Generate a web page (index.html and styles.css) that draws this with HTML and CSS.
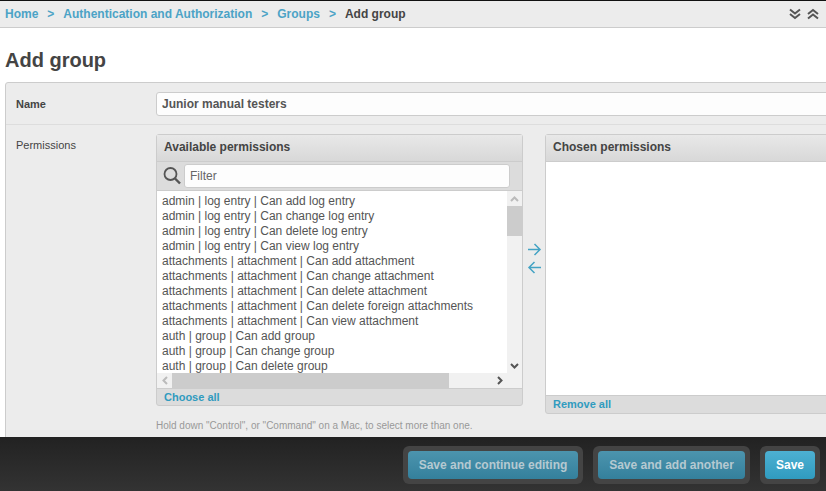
FILE: index.html
```html
<!DOCTYPE html>
<html lang="en">
<head>
    <meta charset="UTF-8">
    <meta name="viewport" content="width=device-width, initial-scale=1.0">
    <title>Add group</title>
    <link rel="stylesheet" href="styles.css">
</head>
<body>
    <header class="topbar">
        <nav class="breadcrumbs">
            <a href="#">Home</a>
            <span class="sep">&gt;</span>
            <a href="#">Authentication and Authorization</a>
            <span class="sep">&gt;</span>
            <a href="#">Groups</a>
            <span class="sep">&gt;</span>
            <span class="current">Add group</span>
        </nav>
        <div class="toggles">
            <svg width="14" height="12" viewBox="0 0 14 12"><path d="M2 1.5l5 4 5-4M2 6l5 4 5-4" fill="none" stroke="#555" stroke-width="2"/></svg>
            <svg width="14" height="12" viewBox="0 0 14 12"><path d="M2 6l5-4 5 4M2 10.5l5-4 5 4" fill="none" stroke="#555" stroke-width="2"/></svg>
        </div>
    </header>

    <main class="content">
        <h1>Add group</h1>
        <div class="module">
            <div class="row row-name">
                <label class="label-strong">Name</label>
                <input class="text-input" type="text" value="Junior manual testers">
            </div>
            <div class="row row-perms">
                <label class="label">Permissions</label>
                <div class="perms">
                    <div class="selector">
                        <div class="box box-available">
                            <h2>Available permissions</h2>
                            <div class="filter">
                                <svg width="20" height="20" viewBox="0 0 20 20"><circle cx="8.5" cy="8" r="6" fill="none" stroke="#555" stroke-width="1.8"/><path d="M13 12.5l5 5" stroke="#555" stroke-width="2.4"/></svg>
                                <input class="filter-input" type="text" placeholder="Filter">
                            </div>
                            <div class="listbox">
                                <div class="list-main">
                                    <ul class="options">
                                        <li>admin | log entry | Can add log entry</li>
                                        <li>admin | log entry | Can change log entry</li>
                                        <li>admin | log entry | Can delete log entry</li>
                                        <li>admin | log entry | Can view log entry</li>
                                        <li>attachments | attachment | Can add attachment</li>
                                        <li>attachments | attachment | Can change attachment</li>
                                        <li>attachments | attachment | Can delete attachment</li>
                                        <li>attachments | attachment | Can delete foreign attachments</li>
                                        <li>attachments | attachment | Can view attachment</li>
                                        <li>auth | group | Can add group</li>
                                        <li>auth | group | Can change group</li>
                                        <li>auth | group | Can delete group</li>
                                    </ul>
                                    <div class="vscroll">
                                        <span class="sb-btn"><svg width="9" height="6" viewBox="0 0 9 6"><path d="M1 5l3.5-3.5L8 5" fill="none" stroke="#bbb" stroke-width="2"/></svg></span>
                                        <span class="vthumb"></span>
                                        <span class="vtrack"></span>
                                        <span class="sb-btn"><svg width="9" height="6" viewBox="0 0 9 6"><path d="M1 1l3.5 3.5L8 1" fill="none" stroke="#555" stroke-width="2"/></svg></span>
                                    </div>
                                </div>
                                <div class="hscroll">
                                    <span class="sb-btn"><svg width="6" height="9" viewBox="0 0 6 9"><path d="M5 1L1.5 4.5 5 8" fill="none" stroke="#bbb" stroke-width="2"/></svg></span>
                                    <span class="hthumb"></span>
                                    <span class="htrack"></span>
                                    <span class="sb-btn"><svg width="6" height="9" viewBox="0 0 6 9"><path d="M1 1l3.5 3.5L1 8" fill="none" stroke="#555" stroke-width="2"/></svg></span>
                                    <span class="sb-corner"></span>
                                </div>
                            </div>
                            <a class="box-link" href="#">Choose all</a>
                        </div>
                        <div class="movers">
                            <svg width="15" height="13" viewBox="0 0 15 13"><path d="M1 6.5h12M7.5 1l5.5 5.5L7.500 12" fill="none" stroke="#44a3c4" stroke-width="1.500"/></svg>
                            <svg width="15" height="13" viewBox="0 0 15 13"><path d="M14 6.500H2M7.500 1L2 6.500 7.500 12" fill="none" stroke="#44a3c4" stroke-width="1.500"/></svg>
                        </div>
                        <div class="box box-chosen">
                            <h2>Chosen permissions</h2>
                            <div class="chosen-list"></div>
                            <a class="box-link" href="#">Remove all</a>
                        </div>
                    </div>
                    <p class="help">Hold down "Control", or "Command" on a Mac, to select more than one.</p>
                </div>
            </div>
        </div>
    </main>

    <footer class="actions">
        <div class="btn-wrap"><button class="btn btn-dim btn-continue">Save and continue editing</button></div>
        <div class="btn-wrap"><button class="btn btn-dim btn-another">Save and add another</button></div>
        <div class="btn-wrap"><button class="btn btn-save">Save</button></div>
    </footer>
</body>
</html>
```

FILE: styles.css
```css
* {
    box-sizing: border-box;
    margin: 0;
    padding: 0;
}

html, body {
    height: 491px;
    overflow: hidden;
}

body {
    font-family: "Liberation Sans", Arial, sans-serif;
    font-size: 12px;
    color: #444;
    background-color: #fff;
    display: flex;
    flex-direction: column;
}

a {
    color: #309bbf;
    text-decoration: none;
}

.topbar {
    height: 28px;
    flex: none;
    display: flex;
    justify-content: space-between;
    align-items: center;
    padding: 0 6px 0 5px;
    background-color: #ececec;
    border-top: 1px solid #111;
    border-bottom: 1px solid #ccc;
}

.breadcrumbs {
    display: flex;
    align-items: center;
    font-size: 12px;
}

.breadcrumbs a {
    color: #4ba3c6;
    font-weight: bold;
}

.breadcrumbs .sep {
    width: 25px;
    text-align: center;
    color: #4ba3c6;
    font-weight: bold;
}

.breadcrumbs .current {
    font-weight: bold;
    color: #444;
}

.toggles {
    display: flex;
    gap: 4px;
}

.content {
    flex: 1;
    min-height: 0;
    padding-left: 5px;
    overflow: hidden;
}

h1 {
    font-size: 20px;
    line-height: 24px;
    font-weight: bold;
    color: #444;
    margin: 20px 0 10px;
}

.module {
    width: 900px;
    background-color: #ececec;
    border: 1px solid #ccc;
    border-radius: 3px 0 0 0;
    height: 400px;
}

.row {
    display: flex;
    padding: 9px 0 0 10px;
}

.row-name {
    height: 42px;
    border-bottom: 1px solid #ddd;
    align-items: flex-start;
}

.label,
.label-strong {
    width: 140px;
    flex: none;
    font-size: 11px;
    line-height: 24px;
    color: #444;
}

.label-strong {
    font-weight: bold;
}

.row-perms .label {
    line-height: 22px;
    margin-top: 0;
}

.text-input {
    width: 744px;
    height: 24px;
    padding: 0 5px;
    font: bold 12px "Liberation Sans", Arial, sans-serif;
    color: #555;
    background-color: #fdfdfd;
    border: 1px solid #ccc;
    border-radius: 3px;
}

.selector {
    display: flex;
    align-items: flex-start;
}

.box {
    border: 1px solid #ccc;
    border-radius: 3px;
    background-color: #dcdcdc;
}

.box h2 {
    height: 27px;
    padding-left: 7px;
    font-size: 12px;
    line-height: 25px;
    font-weight: bold;
    color: #444;
    background: linear-gradient(#e8e8e8, #d8d8d8);
    border-bottom: 1px solid #ccc;
}

.box-available {
    width: 367px;
    height: 272px;
}

.box-chosen {
    width: 300px;
    height: 280px;
}

.filter {
    height: 28px;
    display: flex;
    align-items: center;
    padding: 0 12px 0 5px;
    gap: 2px;
}

.filter-input {
    flex: 1;
    min-width: 0;
    height: 24px;
    padding: 0 5px;
    font: 12px "Liberation Sans", Arial, sans-serif;
    background-color: #fdfdfd;
    border: 1px solid #ccc;
    border-radius: 3px;
}

.filter-input::placeholder {
    color: #666;
    opacity: 1;
}

.listbox {
    width: 366px;
    height: 199px;
    background-color: #fff;
    border-top: 1px solid #ccc;
    border-right: 1px solid #ccc;
    border-bottom: 1px solid #ccc;
}

.list-main {
    height: 182px;
    display: flex;
}

.options {
    flex: 1;
    list-style: none;
    padding: 3px 0 0 5px;
    overflow: hidden;
    font-size: 12px;
    line-height: 15px;
    color: #555;
}

.options li {
    white-space: nowrap;
}

.vscroll {
    width: 15px;
    flex: none;
    display: flex;
    flex-direction: column;
    background-color: #f1f1f1;
}

.sb-btn {
    width: 15px;
    height: 15px;
    flex: none;
    display: flex;
    align-items: center;
    justify-content: center;
}

.vthumb {
    height: 30px;
    flex: none;
    background-color: #ccc;
}

.vtrack,
.htrack {
    flex: 1;
}

.hscroll {
    height: 15px;
    display: flex;
    background-color: #f1f1f1;
}

.hthumb {
    width: 277px;
    flex: none;
    background-color: #ccc;
}

.sb-corner {
    width: 15px;
    flex: none;
}

.box-link {
    display: block;
    padding-left: 7px;
    font-size: 11px;
    line-height: 16px;
    font-weight: bold;
}

.movers {
    width: 22px;
    flex: none;
    display: flex;
    flex-direction: column;
    align-items: center;
    gap: 5px;
    margin-top: 109px;
}

.chosen-list {
    height: 234px;
    background-color: #fff;
    margin-top: 0;
    border-bottom: 1px solid #ccc;
}

.help {
    margin-top: 5px;
    font-size: 10px;
    line-height: 14px;
    color: #999;
}

.actions {
    height: 54px;
    flex: none;
    display: flex;
    justify-content: flex-end;
    align-items: center;
    gap: 10px;
    padding: 2px 6px 0 0;
    background: linear-gradient(#222, #333);
}

.btn-wrap {
    padding: 5px;
    background-color: #444;
    border-radius: 6px;
}

.btn {
    display: block;
    height: 28px;
    font: bold 12px "Liberation Sans", Arial, sans-serif;
    border: none;
    border-radius: 4px;
    cursor: pointer;
}

.btn-dim {
    color: #b5c9d1;
    background: linear-gradient(#4c94ae, #34809c);
}

.btn-continue {
    width: 170px;
}

.btn-another {
    width: 147px;
}

.btn-save {
    width: 50px;
    color: #fff;
    background: linear-gradient(#4db0d2, #309bbf);
}
```
